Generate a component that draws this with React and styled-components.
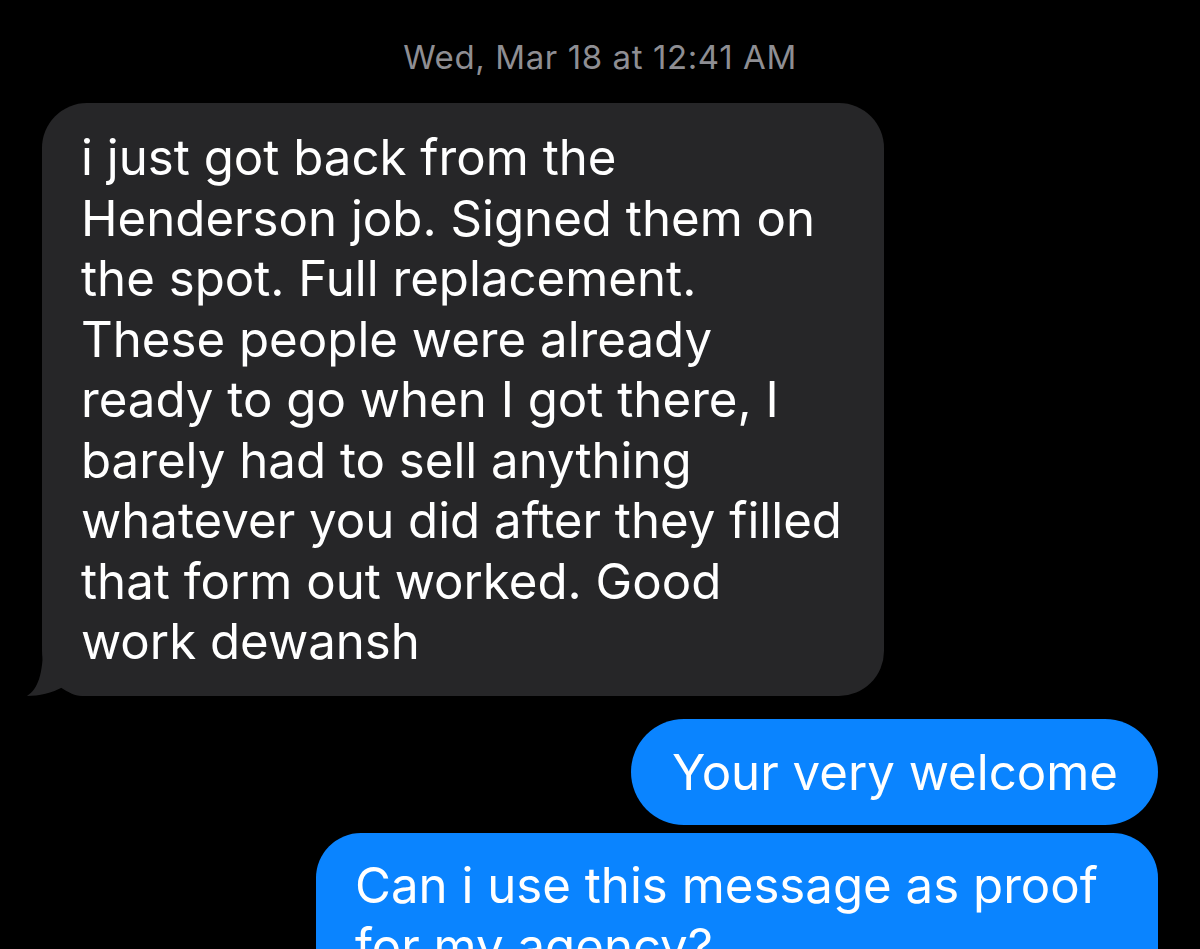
import React from 'react';
import styled, { createGlobalStyle } from 'styled-components';

const GlobalStyle = createGlobalStyle`
  html, body {
    margin: 0;
    padding: 0;
    background: #000;
  }
  body {
    font-family: Inter, "Noto Sans", "Liberation Sans", sans-serif;
    -webkit-font-smoothing: antialiased;
  }
`;

const Screen = styled.div`
  width: 1200px;
  height: 949px;
  overflow: hidden;
  background: #000;
  display: flex;
  flex-direction: column;
  padding: 0 42px;
  box-sizing: border-box;
`;

const Stamp = styled.div`
  text-align: center;
  color: #8e8e93;
  font-size: 33px;
  line-height: 40px;
  letter-spacing: 0.6px;
  padding-top: 37px;
  margin-bottom: 26px;
`;

const Row = styled.div`
  display: flex;
  justify-content: ${(p) => (p.$mine ? 'flex-end' : 'flex-start')};
  margin-top: ${(p) => p.$gap || 0}px;
`;

const Bubble = styled.div`
  position: relative;
  box-sizing: border-box;
  width: ${(p) => (p.$full ? '842px' : 'auto')};
  padding: ${(p) => (p.$pad || '23px 40px 23px 41px')};
  border-radius: ${(p) => (p.$pill ? '53px' : '45px')};
  background: ${(p) => (p.$mine ? '#0a84ff' : '#262628')};
  color: #fff;
  font-size: 49.2px;
  line-height: 60.5px;
  white-space: nowrap;
`;

const Text = styled.div`
  position: relative;
`;

const Tail = styled.svg`
  position: absolute;
  left: -16px;
  bottom: 0;
  width: 60px;
  height: 56px;
`;

const incoming = [
  'i just got back from the',
  'Henderson job. Signed them on',
  'the spot. Full replacement.',
  'These people were already',
  'ready to go when I got there, I',
  'barely had to sell anything',
  'whatever you did after they filled',
  'that form out worked. Good',
  'work dewansh',
];

export default function App() {
  return (
    <Screen>
      <GlobalStyle />
      <Stamp>Wed, Mar 18 at 12:41 AM</Stamp>
      <Row>
        <Bubble $pad="24px 42px 24px 39px">
          <Tail viewBox="0 0 60 56">
            <path
              d="M17 0 L17 6 C17 34 12 49 1 56 C13 56 26 53 37 47 C42 52 48 56 56 56 L60 56 L60 0 Z"
              fill="#262628"
            />
          </Tail>
          <Text>
            {incoming.map((l, i) => (
              <div key={i}>{l}</div>
            ))}
          </Text>
        </Bubble>
      </Row>
      <Row $mine $gap={23}>
        <Bubble $mine $pill>
          <Text>Your very welcome</Text>
        </Bubble>
      </Row>
      <Row $mine $gap={8}>
        <Bubble $mine $full $pad="22px 39px">
          <Text>
            <div>Can i use this message as proof</div>
            <div>for my agency?</div>
          </Text>
        </Bubble>
      </Row>
    </Screen>
  );
}
